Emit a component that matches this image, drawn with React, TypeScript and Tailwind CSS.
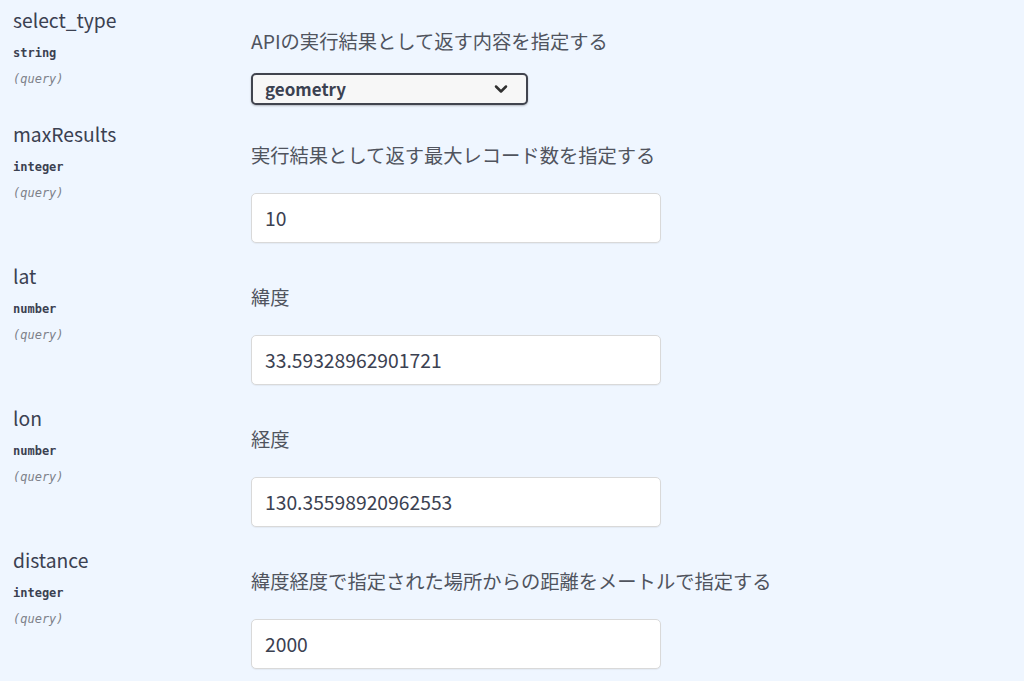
import { ChevronDown } from 'lucide-react'

interface Param {
  name: string
  type: string
  description: string
  value: string
  select?: boolean
}

const params: Param[] = [
  { name: 'select_type', type: 'string', description: 'APIの実行結果として返す内容を指定する', value: 'geometry', select: true },
  { name: 'maxResults', type: 'integer', description: '実行結果として返す最大レコード数を指定する', value: '10' },
  { name: 'lat', type: 'number', description: '緯度', value: '33.59328962901721' },
  { name: 'lon', type: 'number', description: '経度', value: '130.35598920962553' },
  { name: 'distance', type: 'integer', description: '緯度経度で指定された場所からの距離をメートルで指定する', value: '2000' },
]

const sans = "font-['Noto_Sans_CJK_JP','Noto_Sans',sans-serif]"

function ParamRow({ param }: { param: Param }) {
  return (
    <div className="flex">
      <div className="w-[251px] shrink-0 pl-[13px]">
        <div className="text-[19.3px] leading-[28px] text-[#3b4151]">{param.name}</div>
        <div className="mt-[9px] font-['DejaVu_Sans_Mono',monospace] text-[12px] font-bold leading-[20px] text-[#3b4151]">
          {param.type}
        </div>
        <div className="mt-[6px] font-['DejaVu_Sans_Mono',monospace] text-[12px] italic leading-[20px] text-[#7d8189]">
          (query)
        </div>
      </div>

      <div className="flex-1">
        <p className="mt-[21px] text-[19.3px] leading-[28px] text-[#50545e]">{param.description}</p>
        {param.select ? (
          <div className="mt-[18px] mb-[15px] flex h-[32px] w-[277px] items-center justify-between rounded-[5px] border-2 border-[#41444e] bg-[#f7f7f7] pl-[12px] pr-[15px] shadow-[0_1px_2px_rgba(0,0,0,0.25)]">
            <span className="text-[17px] font-bold text-[#3b4151]">{param.value}</span>
            <ChevronDown className="h-5 w-5 text-[#303030]" strokeWidth={3} />
          </div>
        ) : (
          <div className="mt-[24px] mb-[19px] flex h-[50px] w-[410px] items-center rounded-[5px] border border-[#d9d9d9] bg-white pl-[13px] shadow-[0_1px_1px_rgba(0,0,0,0.05)]">
            <span className="text-[19.3px] text-[#3b4151]">{param.value}</span>
          </div>
        )}
      </div>
    </div>
  )
}

export default function App() {
  return (
    <div className={`${sans} min-h-screen bg-[#eff6ff] pt-[6px]`}>
      {params.map((p) => (
        <ParamRow key={p.name} param={p} />
      ))}
    </div>
  )
}
